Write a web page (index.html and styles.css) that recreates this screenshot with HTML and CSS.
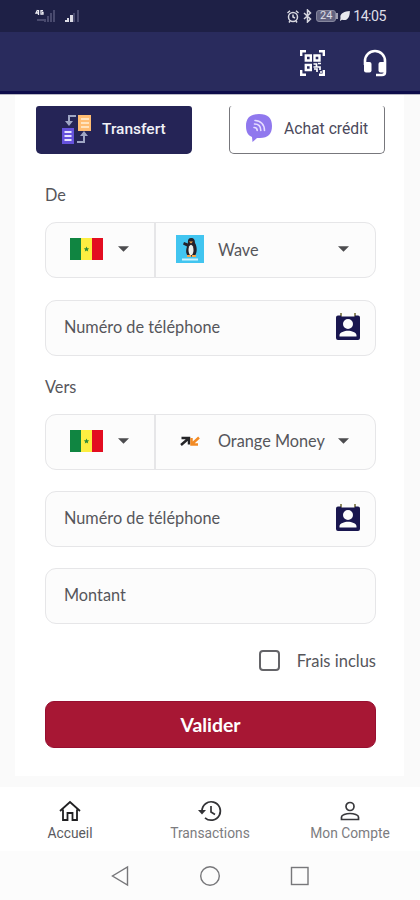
FILE: index.html
```
<!DOCTYPE html>
<html lang="fr">
<head>
<meta charset="utf-8">
<title>Transfert</title>
<link rel="stylesheet" href="styles.css">
</head>
<body>
<svg class="defs" width="0" height="0" aria-hidden="true">
  <symbol id="contact" viewBox="0 0 24 27">
    <path fill="#8f8b62" d="M4 0h2v4H4zM18 0h2v4h-2z"/>
    <path fill="#19164f" fill-rule="evenodd" d="M2 2.500h3v1h14v-1h3a2 2 0 0 1 2 2V25a2 2 0 0 1-2 2H2a2 2 0 0 1-2-2V4.500a2 2 0 0 1 2-2zM12 6a5 5 0 1 0 0 10 5 5 0 0 0 0-10zM3.500 23.500h17v-1.200c0-3-5-4.600-8.500-4.600s-8.500 1.600-8.500 4.600z"/>
  </symbol>
  <symbol id="flag" viewBox="0 0 33 22">
    <path fill="#108541" d="M0 0h11v22H0z"/><path fill="#fdee41" d="M11 0h11v22H11z"/><path fill="#e30d20" d="M22 0h11v22H22z"/>
    <path fill="#2b8a38" d="m16.500 8.500.8 1.800 1.900.1-1.500 1.300.5 1.900-1.700-1-1.700 1 .5-1.900-1.500-1.300 1.900-.1z"/>
  </symbol>
  <symbol id="caret" viewBox="0 0 12 6"><path fill="#4c4c4f" d="M0 0h12L6 6z"/></symbol>
</svg>

<div class="status">
  <svg class="signals" width="46" height="16" viewBox="0 0 46 16">
    <g fill="#494a6e"><path d="M10 11h2v3h-2zM13 8h2v6h-2zM16 5h2v9h-2zM19 2h2v12h-2zM39 5h2v9h-2zM43 2h2v12h-2zM3 11h7v2H3z"/></g>
    <g fill="#dcdce5"><path d="M31 12h2v2h-2zM33 10h2v4h-2zM36 7h3v7h-3z"/></g>
    <path d="M3.500 2 2 5h3M4.500 2v5M9 2.600H7v3.600h2V4.500H8" fill="none" stroke="#eeeef4" stroke-width="1.300"/>
  </svg>
  <div class="status-right">
    <svg class="alarm" width="12" height="13" viewBox="0 0 12 13" fill="none" stroke="#d8d8e0" stroke-width="1.500"><circle cx="6" cy="7" r="4.500"/><path d="M6 4.500V7l2 1M.5 3 3 .8M11.500 3 9 .8M3 11l-1 1.500M9 11l1 1.500"/></svg>
    <svg class="bt" width="9" height="14" viewBox="0 0 9 14" fill="none" stroke="#d8d8e0" stroke-width="1.500"><path d="m1 4 6.500 6L4.500 13V1l3 3L1 10"/></svg>
    <span class="battery">24</span><span class="battery-tip"></span>
    <svg class="leaf" width="10" height="12" viewBox="0 0 10 12"><path fill="#e8e8ee" d="M9.800 1C4 1.500-.5 3.500.5 8L0 11l2-1.200C8 11.500 10 6 9.800 1z"/></svg>
    <span class="clock">14:05</span>
  </div>
</div>

<header class="header">
  <svg class="qr" width="25" height="26" viewBox="0 0 25 26" fill="none" stroke="#fff" stroke-width="2">
    <path d="M1.200 6V1.200H6M19 1.200h4.800V6M1.200 20v4.800H6M23.800 20v4.800H19" stroke-width="2.400"/>
    <path d="M5.800 5.500h5v5h-5zM14.500 5.500h5v5h-5zM5.800 15h5v5h-5z" stroke-width="2.400"/>
    <path d="M13.500 14h3v3h-3M18 13.500h3M17 17h3v3M14 19h3v3M20 22h2" stroke-width="1.700"/>
  </svg>
  <svg class="headset" width="24" height="28" viewBox="0 0 24 28">
    <path d="M2 16v-4a10 10 0 0 1 20 0v11q0 3-3 3h-6" fill="none" stroke="#fff" stroke-width="2.600"/>
    <rect x="1" y="13" width="7.500" height="10.500" rx="2" fill="#fff"/><rect x="15.500" y="13" width="7.500" height="10.500" rx="2" fill="#fff"/>
  </svg>
</header>

<main class="page">
  <section class="card">
    <div class="tabs">
      <div class="tab tab-active">
        <svg width="30" height="30" viewBox="0 0 30 30">
          <path fill="#ffbd73" d="M16 1h13v16H16z"/><path d="M19 5h8M19 9h8M19 13h8" stroke="#fff0d8" stroke-width="1.600"/>
          <path fill="#6552dc" d="M0 14h12v16H0z"/><path d="M2.500 18h7M2.500 22h7M2.500 26h7" stroke="#e9e5ff" stroke-width="1.800"/>
          <path d="M14 2H7v7M15 28h7v-7" fill="none" stroke="#9fa6c4" stroke-width="2"/>
          <path d="m3 7 4 5 4-5zM18 22l4-5 4 5z" fill="#9fa6c4"/>
        </svg>
        <span>Transfert</span>
      </div>
      <div class="tab tab-plain">
        <svg width="26" height="28" viewBox="0 0 26 28">
          <path fill="#9078ee" d="M13 0c9 0 13 4 13 12s-4 12-12 12h-3l-4.500 4L6 23C2 21.500 0 18 0 12 0 4 4 0 13 0z"/>
          <g fill="none" stroke="#e7ddff" stroke-width="1.600" stroke-linecap="round"><path d="M9 6.500c5.500 0 9.500 4 9.500 10M8.500 10c4 0 6.300 2.500 6.300 6.500M8 13.500c2 0 3.200 1.200 3.200 3"/></g>
        </svg>
        <span>Achat crédit</span>
      </div>
    </div>

    <div class="label">De</div>
    <div class="field select">
      <div class="country"><svg width="33" height="22"><use href="#flag"/></svg><svg width="11" height="6"><use href="#caret"/></svg></div>
      <div class="operator">
        <svg width="28" height="28" viewBox="0 0 28 28">
          <path fill="#42c5f0" d="M0 0h28v28H0z"/>
          <path fill="#252129" d="M15 3c3 0 4 2 4 5 2 3 2.500 9 0 12.500q-4 2-7.500 0c-2-3-1.500-6-.5-9L7 9.500 8 7l4 1.500C11.500 5 12.500 3 15 3z"/>
          <ellipse cx="15" cy="15" rx="2.500" ry="5.300" fill="#edf0ec"/><path fill="#f7a548" d="M13 6.500h4l-2 2zM11 20h4v2h-4zM16 20h4v2h-4z"/>
          <path stroke="#c9f4ff" stroke-width="2" d="M6 24.500h16"/>
        </svg>
        <span class="op-name">Wave</span><svg class="op-caret" width="11" height="6"><use href="#caret"/></svg>
      </div>
    </div>
    <div class="field input"><span>Numéro de téléphone</span><svg width="24" height="27"><use href="#contact"/></svg></div>

    <div class="label label-to">Vers</div>
    <div class="field select select-to">
      <div class="country"><svg width="33" height="22"><use href="#flag"/></svg><svg width="11" height="6"><use href="#caret"/></svg></div>
      <div class="operator">
        <svg width="28" height="28" viewBox="0 0 28 28" fill="none" stroke-width="2.500">
          <path stroke="#252528" d="m5 18 7-6M5.500 11H13v6.500"/><path stroke="#f28a24" d="m23 10.500-6.500 6M15.500 11v6.500H22"/>
        </svg>
        <span class="op-name">Orange Money</span><svg class="op-caret" width="11" height="6"><use href="#caret"/></svg>
      </div>
    </div>
    <div class="field input"><span>Numéro de téléphone</span><svg width="24" height="27"><use href="#contact"/></svg></div>
    <div class="field input"><span>Montant</span></div>

    <div class="fees"><span class="box"></span><span class="fees-text">Frais inclus</span></div>
    <div class="submit">Valider</div>
  </section>
</main>

<nav class="nav">
  <div class="nav-item nav-home">
    <svg width="22" height="22" viewBox="0 0 22 22" fill="none" stroke="#202022" stroke-width="1.800"><path d="m1 11 10-9 10 9M4 9.500V20h4.500v-7h5v7H18V9.500"/></svg>
    <span>Accueil</span>
  </div>
  <div class="nav-item">
    <svg width="26" height="22" viewBox="0 0 26 22" fill="none" stroke="#333336" stroke-width="1.700"><path d="M5 11a9.200 9.200 0 1 1 3 6.800M14 6v6l4 2.500"/><path fill="#333336" stroke="none" d="M1 10h8l-4 4.500z"/></svg>
    <span>Transactions</span>
  </div>
  <div class="nav-item">
    <svg width="20" height="22" viewBox="0 0 20 22" fill="none" stroke="#39393c" stroke-width="1.700"><circle cx="10" cy="6.500" r="4"/><path d="M1.500 19.500V17c0-2 4.500-3.500 8.500-3.500s8.500 1.500 8.500 3.500v2.500z"/></svg>
    <span>Mon Compte</span>
  </div>
</nav>
<div class="system">
  <svg width="18" height="22" viewBox="0 0 18 22" fill="none" stroke="#77777a" stroke-width="1.400"><path d="M16.500 2v18L1.500 11z"/></svg>
  <svg width="22" height="22" viewBox="0 0 22 22" fill="none" stroke="#77777a" stroke-width="1.400"><circle cx="11" cy="11" r="9.300"/></svg>
  <svg width="20" height="22" viewBox="0 0 20 22" fill="none" stroke="#77777a" stroke-width="1.400"><rect x="1.500" y="2.500" width="16.500" height="17"/></svg>
</div>
</body>
</html>
```
FILE: styles.css
```
* { box-sizing: border-box; }
body {
  margin: 0;
  width: 420px;
  height: 900px;
  overflow: hidden;
  display: flex;
  flex-direction: column;
  background: #fafafa;
  font-family: Lato, "Liberation Sans", sans-serif;
  color: #56565b;
}
svg { display: block; flex: none; }
.defs { position: absolute; }

.status {
  height: 32px;
  flex: none;
  display: flex;
  justify-content: space-between;
  align-items: center;
  padding: 0 34px;
  background: #1e2046;
}
.status-right { display: flex; align-items: center; color: #dedee6; font-family: Roboto, sans-serif; }
.bt { margin-left: 4px; }
.battery {
  width: 20px;
  height: 12px;
  margin-left: 4px;
  border: 1px solid #85869d;
  border-radius: 3px;
  background: #626380;
  font-size: 11px;
  line-height: 10px;
  text-align: center;
}
.battery-tip { width: 2px; height: 6px; background: #a0a0b2; }
.leaf { margin-left: 2px; }
.clock { margin-left: 3px; font-size: 14.200px; letter-spacing: -0.5px; }

.header {
  height: 63px;
  flex: none;
  display: flex;
  justify-content: flex-end;
  align-items: center;
  gap: 38px;
  padding: 0 33px 0 0;
  border-bottom: 1px solid #b9b9c4;
  box-shadow: inset 0 -3px #0e0d4b;
  background: #292b5d;
}

.page { height: 692px; flex: none; padding: 0 16px 11px 15px; }
.card { height: 681px; padding: 11px 28px 0 30px; background: #fff; }

.tabs { display: flex; justify-content: space-between; margin: 0 -9px; }
.tab {
  width: 156px;
  height: 48px;
  display: flex;
  align-items: center;
  padding-bottom: 3px;
  font-family: Roboto, sans-serif;
  font-size: 15.700px;
}
.tab-active {
  padding-left: 26px;
  gap: 10px;
  border-radius: 3px 3px 5px 5px;
  background: #252456;
  color: #f1f1f7;
  font-size: 15.500px;
  font-weight: 500;
}
.tab-plain {
  padding-left: 16px;
  gap: 12px;
  border: 1px solid #77777c;
  border-top: 0;
  border-radius: 3px 3px 5px 5px;
  color: #4c4a5c;
}

.label { height: 20px; margin-top: 31px; line-height: 20px; font-size: 16.300px; }
.label-to { margin-top: 21px; }
.field {
  height: 56px;
  border: 1px solid #e6e6e8;
  border-radius: 11px;
  background: #fcfcfc;
  font-size: 16.300px;
}
.select { display: flex; margin-top: 17px; }
.country {
  width: 110px;
  flex: none;
  display: flex;
  align-items: center;
  gap: 15px;
  padding: 0 0 2px 24px;
  border-right: 2px solid #e6e6e8;
}
.operator { flex: 1; display: flex; align-items: center; padding: 0 26px 2px 20px; }
.op-name { margin-left: 14px; white-space: nowrap; }
.op-caret { margin-left: auto; }
.input {
  display: flex;
  justify-content: space-between;
  align-items: center;
  margin-top: 21.500px;
  padding: 0 15px 2px 18px;
}
.select-to ~ .input { margin-top: 21px; }
.fees { height: 22px; margin-top: 26px; display: flex; justify-content: flex-end; align-items: center; }
.box { width: 21px; height: 21px; border: 2px solid #646468; border-radius: 4px; }
.fees-text { margin-left: 17px; font-size: 16.500px; }
.submit {
  height: 47px;
  margin-top: 29px;
  border: 1px solid #970f30;
  border-radius: 9px;
  background: #a71734;
  color: #fff;
  font-size: 19.400px;
  font-weight: 700;
  line-height: 45px;
  text-align: center;
}

.nav { height: 64px; flex: none; display: flex; background: #fff; }
.nav-item {
  width: 140px;
  padding-top: 13px;
  display: flex;
  flex-direction: column;
  align-items: center;
  color: #7c7c80;
  font: 13.800px/16px Roboto, sans-serif;
}
.nav-item span { margin-top: 3px; }
.nav-home { color: #5a5a5e; }
.system { flex: 1; display: flex; align-items: center; justify-content: space-between; padding: 1px 110px 0 111px; background: #fcfcfc; }
```
